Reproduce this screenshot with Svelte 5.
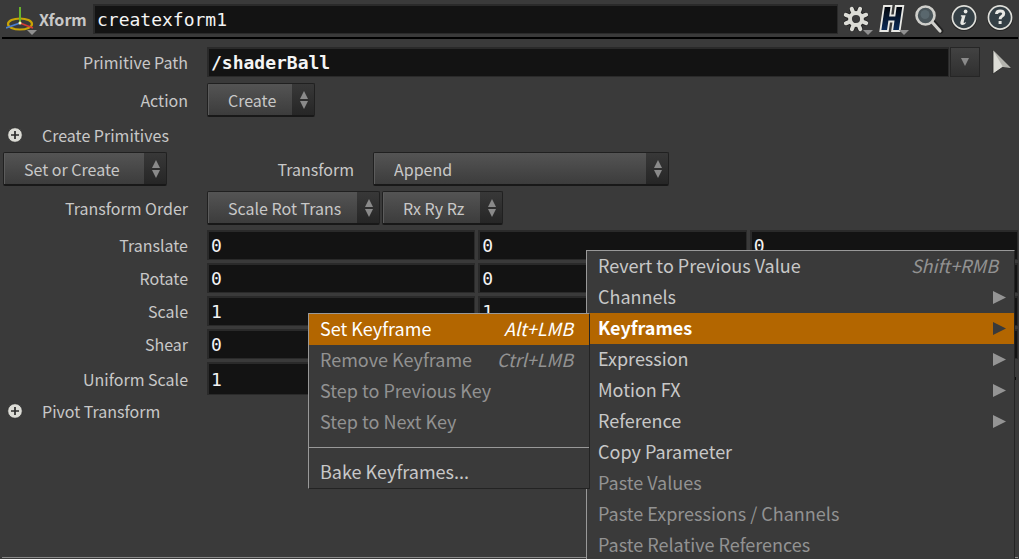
<script>
  let nodeName = $state('createxform1');
  let primPath = $state('/shaderBall');
  let uniform = $state('1');

  const vectors = [
    { label: 'Translate', values: ['0', '0', '0'] },
    { label: 'Rotate', values: ['0', '0', '0'] },
    { label: 'Scale', values: ['1', '1', '1'] },
    { label: 'Shear', values: ['0', '0', '0'] }
  ];
  const axes = ['X', 'Y', 'Z'];

  const menu = [
    { label: 'Revert to Previous Value', key: 'Shift+RMB' },
    { label: 'Channels', sub: true },
    { label: 'Keyframes', sub: true, open: true },
    { label: 'Expression', sub: true },
    { label: 'Motion FX', sub: true },
    { label: 'Reference', sub: true },
    { label: 'Copy Parameter' },
    { label: 'Paste Values', disabled: true },
    { label: 'Paste Expressions / Channels', disabled: true },
    { label: 'Paste Relative References', disabled: true }
  ];
  const keyMenu = [
    { label: 'Set Keyframe', key: 'Alt+LMB', active: true },
    { label: 'Remove Keyframe', key: 'Ctrl+LMB', disabled: true },
    { label: 'Step to Previous Key', disabled: true },
    { label: 'Step to Next Key', disabled: true },
    { separator: true },
    { label: 'Bake Keyframes...' }
  ];
  const teeth = [0, 45, 90, 135, 180, 225, 270, 315];
</script>

{#snippet dropdown(id, value, size)}
  <span class="dropdown {size ?? ''}">
    <select {id} aria-label={value}><option>{value}</option></select>
    <svg class="updown" viewBox="0 0 8 18" aria-hidden="true">
      <path d="M4 0 8 8H0ZM0 10H8L4 18Z" fill="#8a8a8a" />
    </svg>
  </span>
{/snippet}

{#snippet folder(label)}
  <button class="folder">
    <svg viewBox="0 0 16 16" aria-hidden="true">
      <circle cx="8" cy="8" r="7.3" fill="#dcdcd6" stroke="#2c2c2c" stroke-width=".8" />
      <path d="M8 4v8M4 8h8" stroke="#2b2b2b" stroke-width="1.7" />
    </svg>
    <span>{label}</span>
  </button>
{/snippet}

<main class="panel">
  <header>
    <button class="node" aria-label="Node type">
      <svg viewBox="0 0 32 32" aria-hidden="true">
        <ellipse cx="14" cy="18" rx="12" ry="5.5" fill="none" stroke="#c9a406" stroke-width="2.2" />
        <path d="M14 17 0 22" stroke="#4a7fd0" stroke-width="1.8" />
        <path d="m14 17 13 5" stroke="#d83a34" stroke-width="1.8" />
        <path d="M14 17V1" stroke="#69b52b" stroke-width="2" />
        <circle cx="14" cy="17" r="1.5" fill="#fff6b0" />
        <path d="M21 24h10l-5 5z" fill="#909090" />
      </svg>
    </button>
    <label class="type" for="node-name">Xform</label>
    <input id="node-name" class="field" bind:value={nodeName} />
    <div class="tools">
      <button aria-label="Settings">
        <svg viewBox="0 0 32 32" aria-hidden="true">
          <g stroke="#242424" stroke-width="6" stroke-linecap="round">
            {#each teeth as a}<path d="M14 8V6" transform="rotate({a + 22} 14 16)" />{/each}
          </g>
          <g stroke="#dcdcd6" stroke-width="4" stroke-linecap="round">
            {#each teeth as a}<path d="M14 10V5" transform="rotate({a + 22} 14 16)" />{/each}
          </g>
          <circle cx="14" cy="16" r="6" fill="#3a3a3a" stroke="#dcdcd6" stroke-width="3.8" />
          <path d="M21 27h10l-5 5z" fill="#909090" />
        </svg>
      </button>
      <button aria-label="Houdini">
        <svg viewBox="0 0 32 32" aria-hidden="true">
          <defs>
            <linearGradient id="hg" x1="0" y1="0" x2="0" y2="1">
              <stop offset="0" stop-color="#030509" /><stop offset="1" stop-color="#0a2c5c" />
            </linearGradient>
          </defs>
          <path d="M6 3h7.500l-1.300 9.500h4.300L17.800 3h7.500l-3.700 25h-7.500l1.400-9.500h-4.300L9.800 28H2.300Z" fill="url(#hg)" stroke="#e8e8e4" stroke-width="1.8" />
          <path d="M21 27h10l-5 5z" fill="#909090" />
        </svg>
      </button>
      <button aria-label="Search">
        <svg viewBox="0 0 32 32" aria-hidden="true">
          <path d="m20 20 7 8" stroke="#222" stroke-width="5" stroke-linecap="round" />
          <path d="m18 19 8 9" stroke="#cfcfcb" stroke-width="3.2" stroke-linecap="round" />
          <circle cx="11.500" cy="12.500" r="9" fill="#4a555a" stroke="#cfcfcb" stroke-width="2.6" />
          <circle cx="11" cy="11.500" r="4.500" fill="#64737a" opacity=".6" />
        </svg>
      </button>
      <button aria-label="Information">
        <svg viewBox="0 0 32 32" aria-hidden="true">
          <circle cx="14" cy="15" r="13" fill="#242424" />
          <circle cx="14" cy="14.500" r="11.600" fill="#343f45" stroke="#deded9" stroke-width="1.7" />
          <circle cx="15.600" cy="8.500" r="1.900" fill="#e8e8e4" />
          <path d="M11 12.200h4.600L13.700 19q-.4 1.800 1.800.3l.7.500q-2.200 2.600-4.400 2.200-2-.4-1.400-2.700l1.300-4.900q.3-1.200-1-1.200z" fill="#e8e8e4" />
        </svg>
      </button>
      <button aria-label="Help">
        <svg viewBox="0 0 32 32" aria-hidden="true">
          <circle cx="14" cy="15" r="13" fill="#242424" />
          <circle cx="14" cy="14.500" r="11.600" fill="#343f45" stroke="#deded9" stroke-width="1.7" />
          <path d="M10.500 11q.2-3 3.700-3 3.500 0 3.500 2.800 0 1.500-1.800 2.500-1.800 1-1.800 3" fill="none" stroke="#e8e8e4" stroke-width="3" />
          <rect x="12.600" y="18" width="3" height="3" fill="#e8e8e4" />
        </svg>
      </button>
    </div>
  </header>

  <div class="row path">
    <label for="prim-path">Primitive Path</label>
    <div class="controls">
      <input id="prim-path" class="field bold" bind:value={primPath} />
      <button class="pick" aria-label="Choose path">
        <svg viewBox="0 0 8 8" aria-hidden="true"><path d="M0 0h8L4 8z" fill="#8a8a8a" /></svg>
      </button>
      <button class="cursor" aria-label="Select primitive">
        <svg viewBox="0 0 20 26" aria-hidden="true">
          <path d="M1 1 19 19 11 18 1 25Z" fill="#dcdcd6" stroke="#262626" stroke-width=".8" />
          <path d="m11 18 8 1L1 1Z" fill="#b4b4ae" />
        </svg>
      </button>
    </div>
  </div>

  <div class="row">
    <label for="action">Action</label>
    <div class="controls">{@render dropdown('action', 'Create')}</div>
  </div>

  {@render folder('Create Primitives')}

  <div class="transform">
    {@render dropdown('transform-mode', 'Set or Create', 'medium')}
    <label for="transform">Transform</label>
    {@render dropdown('transform', 'Append', 'wide')}
  </div>

  <div class="row">
    <label for="order">Transform Order</label>
    <div class="controls orders">
      {@render dropdown('order', 'Scale Rot Trans')}
      {@render dropdown('rot-order', 'Rx Ry Rz')}
    </div>
  </div>

  <div class="vectors">
    {#each vectors as v}
      <div class="row">
        <label for="{v.label}-X">{v.label}</label>
        <div class="controls triple">
          {#each v.values as value, i}
            <input id="{v.label}-{axes[i]}" class="field" aria-label="{v.label} {axes[i]}" {value} />
          {/each}
        </div>
      </div>
    {/each}
    <div class="row">
      <label for="uniform">Uniform Scale</label>
      <div class="controls triple">
        <input id="uniform" class="field tall" bind:value={uniform} />
        <input class="slider" type="range" min="0" max="10" step="any" bind:value={uniform} aria-label="Uniform Scale slider" />
      </div>
    </div>
  </div>

  {@render folder('Pivot Transform')}

  <hr class="edge" />

  <div class="menu main-menu" role="menu">
    {#each menu as item}
      <div class="slot">
        <button class="item" class:current={item.open} role="menuitem" disabled={item.disabled}>
          <span>{item.label}</span>
          {#if item.key}<em>{item.key}</em>{/if}
          {#if item.sub}
            <svg viewBox="0 0 13 13" aria-hidden="true"><path d="M0 0 13 6.500 0 13z" fill="currentColor" /></svg>
          {/if}
        </button>
        {#if item.open}
          <div class="menu sub-menu" role="menu">
            {#each keyMenu as k}
              {#if k.separator}
                <hr />
              {:else}
                <button class="item" class:active={k.active} role="menuitem" disabled={k.disabled}>
                  <span>{k.label}</span>
                  {#if k.key}<em>{k.key}</em>{/if}
                </button>
              {/if}
            {/each}
          </div>
        {/if}
      </div>
    {/each}
  </div>
</main>

<style>
  :global(body) {
    margin: 0;
    background: #3a3a3a;
  }
  .panel {
    position: relative;
    display: flex;
    flex-direction: column;
    box-sizing: border-box;
    min-height: 100vh;
    overflow: hidden;
    padding: 0 1px 1px 2px;
    background: #3a3a3a;
    color: #c8c8c8;
    font: 16px/24px "Noto Sans CJK SC", "Noto Sans", sans-serif;
  }
  .panel * {
    box-sizing: border-box;
  }
  button,
  select,
  input {
    margin: 0;
    font: inherit;
    color: inherit;
  }
  button {
    padding: 0;
    border: 0;
    background: none;
    text-align: left;
  }
  svg {
    display: block;
  }
  header {
    display: flex;
    align-items: center;
    height: 39px;
    border-bottom: 2px solid #000;
  }
  .node {
    width: 32px;
    margin: 6px 1px 0 4px;
  }
  .node svg {
    width: 32px;
    height: 32px;
  }
  .type {
    width: 54px;
    font-weight: 700;
  }
  .field {
    min-width: 0;
    width: 100%;
    height: 30px;
    padding: 0 2px;
    border: 2px solid #2a2a2a;
    border-right-width: 1px;
    border-bottom-width: 1px;
    border-radius: 0;
    background: #131313;
    color: #f4f4f4;
    font: 18px/24px "DejaVu Sans Mono", monospace;
    outline: 0;
  }
  header .field {
    flex: 1;
  }
  .field.bold {
    font-weight: 700;
  }
  .field.tall {
    height: 33px;
  }
  .tools {
    display: flex;
    gap: 4px;
    padding-left: 4px;
  }
  .tools svg {
    width: 32px;
    height: 32px;
  }
  .row {
    display: flex;
    align-items: center;
    margin-bottom: 5px;
  }
  .row > label {
    flex: none;
    width: 205px;
    padding-right: 19px;
    text-align: right;
  }
  .controls {
    display: flex;
    flex: 1;
    align-items: center;
  }
  .path {
    margin: 8px 0 6px;
  }
  .pick {
    flex: none;
    display: grid;
    place-items: center;
    width: 30px;
    height: 30px;
    margin-left: 1px;
    border: 1px solid #262626;
    background: linear-gradient(#424242, #303030);
  }
  .pick svg {
    width: 8px;
    height: 8px;
  }
  .cursor {
    flex: none;
    margin: 0 6px 0 12px;
  }
  .cursor svg {
    width: 20px;
    height: 26px;
  }
  .dropdown {
    position: relative;
    display: inline-flex;
  }
  .dropdown select {
    appearance: none;
    width: 100%;
    height: 34px;
    padding: 0 37px 0 20px;
    border: 1px solid #202020;
    border-bottom: 2px solid #181818;
    border-radius: 2px;
    background:
      linear-gradient(#383838, #262626) right / 22px 100% no-repeat,
      linear-gradient(#545454, #3c3c3c);
    box-shadow: inset 1px 0 #5c5c5c;
    outline: 0;
  }
  .updown {
    position: absolute;
    top: 8px;
    right: 7px;
    width: 8px;
    height: 18px;
    pointer-events: none;
  }
  .medium {
    width: 164px;
  }
  .wide {
    width: 296px;
  }
  .folder {
    display: flex;
    align-items: center;
    gap: 19px;
    height: 24px;
    padding-left: 5px;
    margin: 1px 0 5px;
  }
  .folder svg {
    width: 16px;
    height: 16px;
  }
  .transform {
    display: flex;
    align-items: center;
    margin: 0 0 5px 1px;
  }
  .transform label {
    width: 206px;
    padding-right: 19px;
    text-align: right;
  }
  .orders {
    gap: 2px;
  }
  .vectors {
    display: grid;
    gap: 3px;
    margin-bottom: 3px;
  }
  .vectors .row {
    margin: 0;
  }
  .triple {
    display: grid;
    grid-template-columns: repeat(3, minmax(0, 1fr));
    gap: 3px;
  }
  .slider {
    grid-column: span 2;
    appearance: none;
    height: 3px;
    margin-right: 2px;
    background: #0c0c0c;
  }
  .edge {
    width: 100%;
    margin: auto 0 0;
    border: 0;
    border-top: 1px solid #8c8c8c;
  }
  .menu {
    position: absolute;
    border: 1px solid #232323;
    border-top-color: #999;
    border-left-color: #999;
    background: #3a3a3a;
    font-size: 18px;
  }
  .main-menu {
    top: 250px;
    right: 4px;
    width: 429px;
  }
  .slot {
    position: relative;
  }
  .sub-menu {
    top: 0;
    right: calc(100% - 3px);
    width: 282px;
  }
  .item {
    display: flex;
    align-items: center;
    justify-content: space-between;
    width: 100%;
    height: 31px;
    padding: 0 16px 0 11px;
  }
  .item span,
  .item em {
    padding-bottom: 3px;
  }
  .item:disabled {
    color: #929292;
  }
  .item em {
    color: #929292;
  }
  .item svg {
    width: 13px;
    height: 13px;
    margin-right: -8px;
    color: #949494;
  }
  .current,
  .active {
    background: #b36600;
    color: #fff;
  }
  .current {
    font-weight: 700;
  }
  .current svg {
    color: #3a3a3a;
  }
  .active em {
    color: #fff;
  }
  .sub-menu hr {
    margin: 9px 0;
    border: 0;
    border-top: 1px solid #999;
  }
</style>
